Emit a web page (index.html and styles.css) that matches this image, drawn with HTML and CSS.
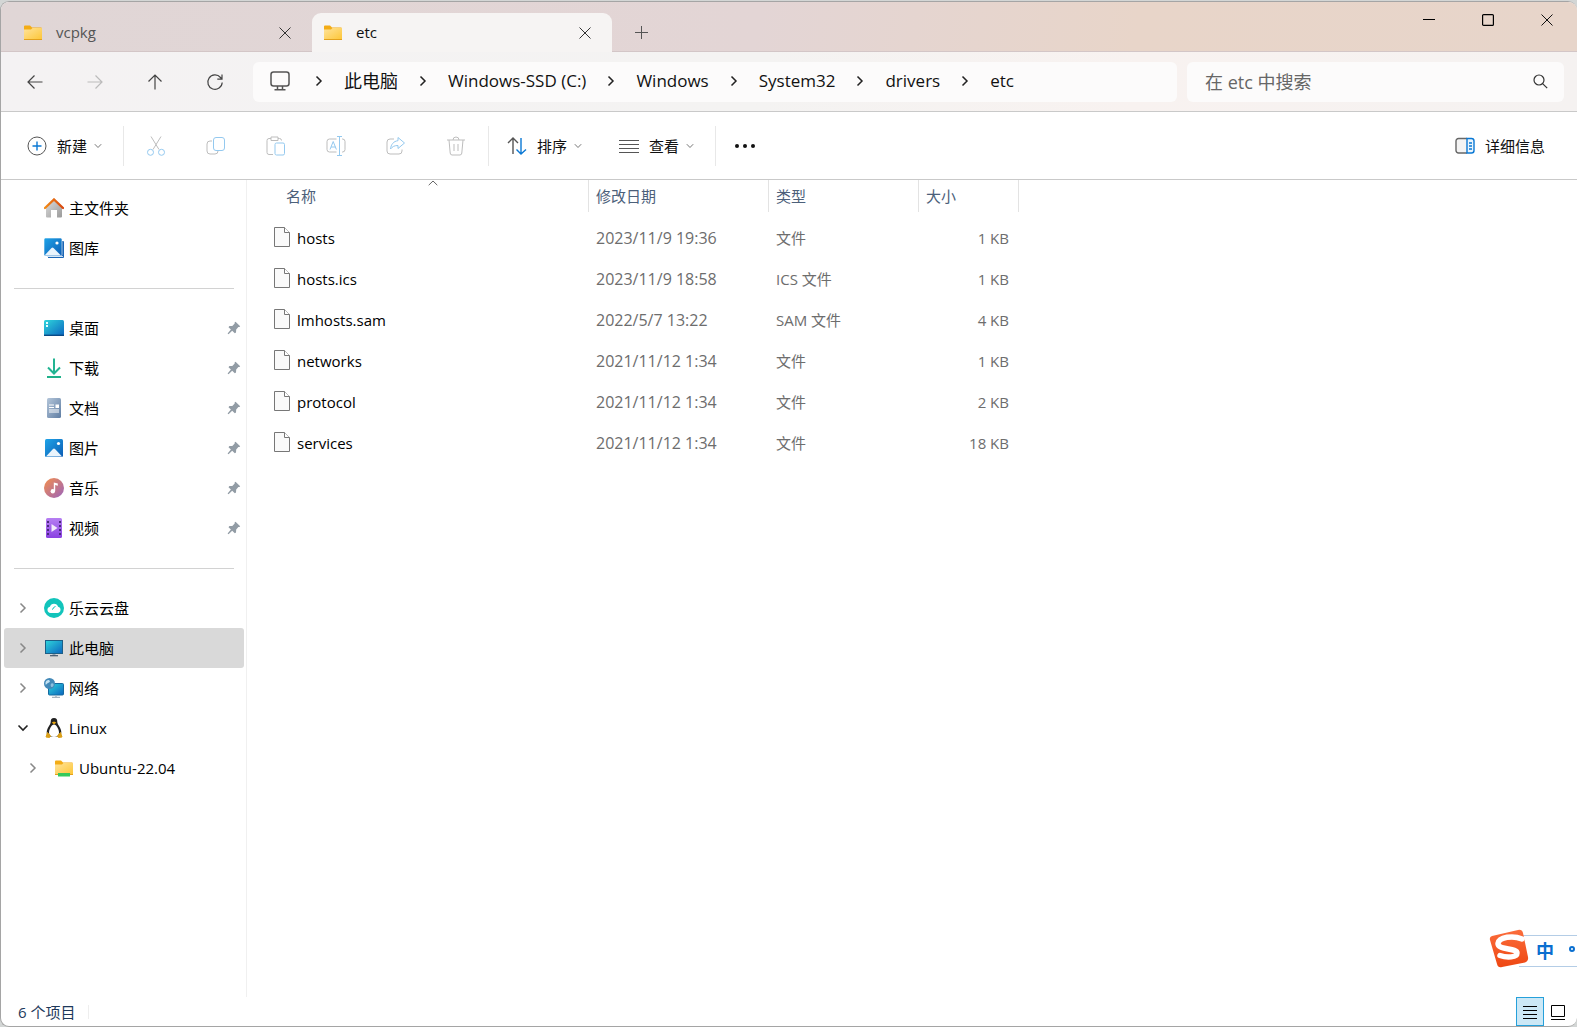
FILE: index.html
```html
<!DOCTYPE html>
<html lang="zh-CN">
<head>
<meta charset="utf-8">
<title>etc</title>
<meta name="viewport" content="width=device-width, initial-scale=1">
<link rel="stylesheet" href="styles.css">
</head>
<body>
<svg class="defs" width="0" height="0" aria-hidden="true">
  <defs>
    <linearGradient id="gFolder" x1="0" y1="0" x2="1" y2="1"><stop offset="0" stop-color="#ffe39a"/><stop offset="1" stop-color="#fdc637"/></linearGradient>
    <linearGradient id="gBlue" x1="0" y1="0" x2="1" y2="1"><stop offset="0" stop-color="#1fa4e8"/><stop offset="1" stop-color="#0c5cb4"/></linearGradient>
    <linearGradient id="gCyan" x1="0" y1="0" x2="1" y2="1"><stop offset="0" stop-color="#2fd6dc"/><stop offset="1" stop-color="#0b64bf"/></linearGradient>
    <linearGradient id="gHome" x1="0" y1="0" x2="1" y2="1"><stop offset="0" stop-color="#dcdcdc"/><stop offset="1" stop-color="#9a9a9a"/></linearGradient>
    <linearGradient id="gRoof" x1="0" y1="0" x2="1" y2="0"><stop offset="0" stop-color="#f28a17"/><stop offset="1" stop-color="#d8480f"/></linearGradient>
    <linearGradient id="gDoc" x1="0" y1="0" x2="1" y2="1"><stop offset="0" stop-color="#b4c6da"/><stop offset="1" stop-color="#5f7da3"/></linearGradient>
    <linearGradient id="gMusic" x1="0" y1="0" x2="1" y2="1"><stop offset="0" stop-color="#f58f4b"/><stop offset="1" stop-color="#9a63bd"/></linearGradient>
    <linearGradient id="gVideo" x1="0" y1="0" x2="0" y2="1"><stop offset="0" stop-color="#b67ff2"/><stop offset="1" stop-color="#8a41e2"/></linearGradient>
    <linearGradient id="gSogou" x1="0" y1="0" x2="0" y2="1"><stop offset="0" stop-color="#fb6d3c"/><stop offset="1" stop-color="#ee4712"/></linearGradient>
    <symbol id="folder" viewBox="0 0 20 20"><path d="M1 3.500a1 1 0 0 1 1-1h5l2 2h9.500v12.500H1z" fill="#f3ac16"/><path d="M1 6.500h7l1.500-1.500H18a1 1 0 0 1 1 1v10.500H1z" fill="url(#gFolder)"/><path d="M1 16.500h18" stroke="#e3a11c" stroke-width="1"/></symbol>
    <symbol id="close" viewBox="0 0 12 12"><path d="M.5.5l11 11M11.500.5l-11 11" stroke="currentColor" fill="none"/></symbol>
    <symbol id="chev" viewBox="0 0 8 12"><path d="M1.500 1.500L6 6l-4.500 4.500" stroke="currentColor" stroke-width="1.500" fill="none"/></symbol>
    <symbol id="caret" viewBox="0 0 8 6"><path d="M.8 1.200L4 4.500l3.200-3.300" stroke="#777" fill="none"/></symbol>
    <symbol id="pin" viewBox="0 0 14 14"><path d="M8.500.8l4.700 4.400-.8.900-1-.1-2.200 2.500-.2 3-1.200.7-2.600-2.400L1.500 13.200l-.9-.8 3.300-3.800L1.500 6.200l.9-1.200 2.900-.1 2.400-2.400-.1-1z" fill="#929ca5"/></symbol>
    <symbol id="file" viewBox="0 0 16 20"><path d="M.5.5h10l5 5v14H.5z" fill="#fafafa" stroke="#777"/><path d="M10.500.5v5h5" fill="#fff" stroke="#777"/></symbol>
  </defs>
</svg>

<div class="window">
  <header class="titlebar">
    <div class="tab">
      <svg class="ico"><use href="#folder"/></svg><span class="tab-name">vcpkg</span>
      <button class="tab-close" aria-label="关闭标签页"><svg width="12" height="12"><use href="#close"/></svg></button>
    </div>
    <div class="tab tab-active">
      <svg class="ico"><use href="#folder"/></svg><span class="tab-name">etc</span>
      <button class="tab-close" aria-label="关闭标签页"><svg width="12" height="12"><use href="#close"/></svg></button>
    </div>
    <button class="tab-add" aria-label="新标签页"><svg width="13" height="13" viewBox="0 0 13 13"><path d="M6.500 0v13M0 6.500h13" stroke="#555"/></svg></button>
    <div class="caption">
      <button aria-label="最小化"><svg width="12" height="12" viewBox="0 0 12 12"><path d="M0 5.500h12" stroke="#000"/></svg></button>
      <button aria-label="最大化"><svg width="12" height="12" viewBox="0 0 12 12"><rect x=".6" y=".6" width="10.800" height="10.800" rx="1" fill="none" stroke="#000" stroke-width="1.200"/></svg></button>
      <button aria-label="关闭"><svg width="12" height="12"><use href="#close"/></svg></button>
    </div>
  </header>

  <nav class="navbar" aria-label="导航">
    <button class="nav-btn" aria-label="后退"><svg width="16" height="16" viewBox="0 0 16 16"><path d="M15.500 8H1M7.500 1.500L1 8l6.500 6.500"/></svg></button>
    <button class="nav-btn nav-off" aria-label="前进"><svg width="16" height="16" viewBox="0 0 16 16"><path d="M.5 8H15M8.500 1.500L15 8l-6.500 6.500"/></svg></button>
    <button class="nav-btn" aria-label="向上"><svg width="16" height="16" viewBox="0 0 16 16"><path d="M8 15.500V1M1.500 7.500L8 1l6.500 6.500"/></svg></button>
    <button class="nav-btn" aria-label="刷新"><svg width="18" height="18" viewBox="0 0 18 18"><path d="M16.200 9.500A7.200 7.200 0 1 1 14.500 4.500L16 6.200M16 1.500v4.700h-4.700"/></svg></button>
    <div class="address">
      <svg class="pc" width="20" height="20" viewBox="0 0 20 20"><rect x="1" y="1" width="18" height="14" rx="2.500"/><path d="M7.500 15v3.500M12.500 15v3.500M4.500 18.700h11"/></svg>
      <svg class="sep"><use href="#chev"/></svg><a href="#" class="cjk">此电脑</a>
      <svg class="sep"><use href="#chev"/></svg><a href="#">Windows-SSD (C:)</a>
      <svg class="sep"><use href="#chev"/></svg><a href="#">Windows</a>
      <svg class="sep"><use href="#chev"/></svg><a href="#">System32</a>
      <svg class="sep"><use href="#chev"/></svg><a href="#">drivers</a>
      <svg class="sep"><use href="#chev"/></svg><a href="#">etc</a>
    </div>
    <label class="search">
      <input type="text" placeholder="在 etc 中搜索" aria-label="在 etc 中搜索">
      <svg width="15" height="15" viewBox="0 0 15 15"><circle cx="6" cy="6" r="5"/><path d="M9.600 9.600l4.600 4.600"/></svg>
    </label>
  </nav>

  <div class="toolbar">
    <button class="tool tool-new"><svg width="20" height="20" viewBox="0 0 20 20"><circle cx="10" cy="10" r="9" stroke="#555"/><path d="M10 5.500v9M5.500 10h9" stroke="#0a78d4" stroke-width="1.400"/></svg>新建<svg class="drop"><use href="#caret"/></svg></button>
    <span class="rule"></span>
    <div class="icons">
      <button disabled aria-label="剪切"><svg width="20" height="20" viewBox="0 0 20 20"><path d="M5 .5l8 13M15 .5l-8 13" stroke="#bdbdbd"/><circle cx="4.500" cy="16.300" r="3" stroke="#94c9ef"/><circle cx="15.500" cy="16.300" r="3" stroke="#94c9ef"/></svg></button>
      <button disabled aria-label="复制"><svg width="20" height="20" viewBox="0 0 20 20"><path d="M6 5H4a3 3 0 0 0-3 3v7a3 3 0 0 0 3 3h5a3 3 0 0 0 3-3" stroke="#bdbdbd"/><rect x="7.500" y="1.500" width="11" height="13" rx="2.500" stroke="#94c9ef"/></svg></button>
      <button disabled aria-label="粘贴"><svg width="20" height="20" viewBox="0 0 20 20"><path d="M5 2.500H3a2 2 0 0 0-2 2v12a2 2 0 0 0 2 2h4M12 2.500h1.500a2 2 0 0 1 2 2M5 1h7v3.500H5z" stroke="#bdbdbd"/><rect x="9" y="7" width="9.500" height="12" rx="1.500" stroke="#94c9ef"/></svg></button>
      <button disabled aria-label="重命名"><svg width="20" height="20" viewBox="0 0 20 20"><path d="M10.500 3H3.500A2.500 2.500 0 0 0 1 5.500v8A2.500 2.500 0 0 0 3.500 16h7M16 3h.5A2.500 2.500 0 0 1 19 5.500v8a2.500 2.500 0 0 1-2.500 2.500H16" stroke="#bdbdbd"/><path d="M13.500.5v19M11 .5h5M11 19.500h5M4 13.500l3.200-8 3.200 8M5 11h4.500" stroke="#94c9ef"/></svg></button>
      <button disabled aria-label="共享"><svg width="20" height="20" viewBox="0 0 20 20"><path d="M8 3H4a3 3 0 0 0-3 3v9a3 3 0 0 0 3 3h9a3 3 0 0 0 3-3v-1.500" stroke="#bdbdbd"/><path d="M12 1.500L18.500 7 12 12.500V9.500c-3.500 0-5.500 1-7.500 3.500.5-4.500 3-7.800 7.500-8.300z" stroke="#94c9ef"/></svg></button>
      <button disabled aria-label="删除"><svg width="20" height="20" viewBox="0 0 20 20"><path d="M1 4h18M7 4a3 3 0 0 1 6 0M3 4l1.200 13A2 2 0 0 0 6 19h8a2 2 0 0 0 1.800-2L17 4M8 8v7M12 8v7" stroke="#bdbdbd"/></svg></button>
    </div>
    <span class="rule"></span>
    <button class="tool"><svg width="20" height="20" viewBox="0 0 20 20"><path d="M6 18V2M1 7l5-5 5 5" stroke="#555" stroke-width="1.400"/><path d="M14 2v16M9.500 13.500L14 18l5-4.500" stroke="#0a78d4" stroke-width="1.400"/></svg>排序<svg class="drop"><use href="#caret"/></svg></button>
    <button class="tool"><svg width="20" height="20" viewBox="0 0 20 20"><path d="M0 4.500h20M0 8.500h20M0 12.500h20M0 16.500h20" stroke="#555"/></svg>查看<svg class="drop"><use href="#caret"/></svg></button>
    <span class="rule"></span>
    <button class="more" aria-label="更多"><svg width="22" height="6" viewBox="0 0 22 6"><circle cx="3" cy="3" r="2"/><circle cx="11" cy="3" r="2"/><circle cx="19" cy="3" r="2"/></svg></button>
    <button class="tool details"><svg width="20" height="20" viewBox="0 0 20 20"><path d="M12 2.500H3.500A2.500 2.500 0 0 0 1 5v9.500A2.500 2.500 0 0 0 3.500 17H12" stroke="#666" stroke-width="1.400" fill="#f4f4f4"/><path d="M12 2.500h4.500A2.500 2.500 0 0 1 19 5v9.500a2.500 2.500 0 0 1-2.500 2.500H12zM14 7h3M14 10h3M14 13h3" stroke="#0a78d4" stroke-width="1.400" fill="#eaf5fd"/></svg>详细信息</button>
  </div>

  <div class="body">
    <aside class="sidebar">
      <a href="#" class="item"><svg class="ico" viewBox="0 0 20 20"><path d="M2 9l8-7 8 7v9.500a1 1 0 0 1-1 1h-4V12H7v7.500H3a1 1 0 0 1-1-1z" fill="url(#gHome)"/><path d="M1 10l9-8.500 9 8.500" fill="none" stroke="url(#gRoof)" stroke-width="2.400" stroke-linecap="round"/></svg>主文件夹</a>
      <a href="#" class="item"><svg class="ico" viewBox="0 0 20 20"><path d="M4 3h15a1 1 0 0 1 1 1v15a1 1 0 0 1-1 1H4z" fill="#1b66b5"/><path d="M3 18.500h16" stroke="#c9dff3"/><rect width="18" height="18" rx="1.500" fill="url(#gBlue)" stroke="#fff" stroke-width=".6"/><path d="M.5 17.500l7-7.500a1.500 1.500 0 0 1 2 0l7.500 7.500z" fill="#eaf4fc"/><circle cx="13" cy="5" r="1.600" fill="#fff"/></svg>图库</a>
      <hr>
      <a href="#" class="item"><svg class="ico" viewBox="0 0 20 20"><rect y="2" width="20" height="16" rx="1.500" fill="url(#gCyan)"/><path d="M0 17.300h20" stroke="#0a4a86" stroke-width="1.400"/><path d="M2 4h2v2H2zM2 7h2v2H2z" fill="#e5ffff"/></svg>桌面<svg class="pin"><use href="#pin"/></svg></a>
      <a href="#" class="item"><svg class="ico" viewBox="0 0 20 20"><path d="M10 .5v15M4 9.500l6 6 6-6" fill="none" stroke="#22b492" stroke-width="2"/><path d="M3 19h14" stroke="#1fb18a" stroke-width="2"/></svg>下载<svg class="pin"><use href="#pin"/></svg></a>
      <a href="#" class="item"><svg class="ico" viewBox="0 0 20 20"><rect x="3" width="14" height="20" rx="1.500" fill="url(#gDoc)"/><path d="M5 7h5M5 9.500h5M5 12h10M5 14h10" stroke="#fff" stroke-width="1.200"/><path d="M11.500 6.500H15V10h-3.500z" fill="#fff"/></svg>文档<svg class="pin"><use href="#pin"/></svg></a>
      <a href="#" class="item"><svg class="ico" viewBox="0 0 20 20"><rect x="1" y="1" width="18" height="18" rx="1.500" fill="url(#gBlue)"/><path d="M2 18.500l7-7.500a1.500 1.500 0 0 1 2 0l7 7.500z" fill="#eaf4fc"/><circle cx="14.500" cy="5.500" r="1.600" fill="#fff"/></svg>图片<svg class="pin"><use href="#pin"/></svg></a>
      <a href="#" class="item"><svg class="ico" viewBox="0 0 20 20"><circle cx="10" cy="10" r="10" fill="url(#gMusic)"/><circle cx="8.800" cy="13.200" r="2.200" fill="#fff"/><path d="M9.800 13.200V4.500l4 1v2.200l-2.600-.6v6.100z" fill="#fff"/></svg>音乐<svg class="pin"><use href="#pin"/></svg></a>
      <a href="#" class="item"><svg class="ico" viewBox="0 0 20 20"><rect x="2" width="16" height="20" rx="1.500" fill="url(#gVideo)"/><path d="M4 3v15M16 3v15" stroke="#4b2a7d" stroke-width="2" stroke-dasharray="2 2"/><path d="M7.500 6l6 4-6 4z" fill="#f2eafb"/></svg>视频<svg class="pin"><use href="#pin"/></svg></a>
      <hr>
      <a href="#" class="item"><svg class="exp"><use href="#chev"/></svg><svg class="ico" viewBox="0 0 20 20"><circle cx="10" cy="10" r="10" fill="#12c4bb"/><path d="M6.500 15a3.200 3.200 0 0 1-.6-6.300 4.300 4.300 0 0 1 8.200 0A3.200 3.200 0 0 1 13.500 15z" fill="#fff"/><path d="M8 11.500c1.500 0 1.300-3 3.500-3" fill="none" stroke="#12c4bb"/></svg>乐云云盘</a>
      <a href="#" class="item selected"><svg class="exp"><use href="#chev"/></svg><svg class="ico" viewBox="0 0 20 20"><rect x="1.500" y="2.500" width="17" height="13" fill="url(#gCyan)" stroke="#1d5f86"/><path d="M10 16v2" stroke="#8fa3b3" stroke-width="3"/><path d="M6 17.700h8" stroke="#44566a" stroke-width="1.200"/></svg>此电脑</a>
      <a href="#" class="item"><svg class="exp"><use href="#chev"/></svg><svg class="ico" viewBox="0 0 20 20"><rect x="4.500" y="5.500" width="15" height="11.500" rx="1" fill="url(#gCyan)" stroke="#156a9f"/><path d="M8 19.400h8M12 17.500v1.500" stroke="#a6b3bf" stroke-width="1.400"/><circle cx="5.500" cy="5.500" r="5.500" fill="#4389b8"/><path d="M1.500 4.500c1-2.500 3-3 4-2s0 2-1.500 2.500-1.500 2-2.500 1.500z" fill="#c4e2f2"/><path d="M7.500 5.500c1.500-.5 2.500.5 2 2S7.500 9.500 7 8.500s-.5-2.500.5-3z" fill="#8fc0dd"/></svg>网络</a>
      <a href="#" class="item"><svg class="exp open" viewBox="0 0 12 8"><path d="M1.500 1.500L6 6l4.500-4.500" fill="none" stroke="#222" stroke-width="1.600"/></svg><svg class="ico" viewBox="0 0 20 20"><path d="M10 0c2.500 0 3.300 1.500 3.300 4 0 3 4 5.500 4 10.500 0 3-2.300 4.500-7.300 4.500S2.700 17.500 2.700 14.500c0-5 4-7.500 4-10.500 0-2.500.8-4 3.300-4z" fill="#222"/><path d="M10 6.500c2.500 0 5 5 5 8s-2 4.500-5 4.500-5-1.500-5-4.500 2.500-8 5-8z" fill="#fff"/><path d="M7.800 4.500L10 3.500l2.300 1L10 6.500z" fill="#e5a50f"/><path d="M3.500 14.500l3 3.500-1 1.500-3.500-.5zM16.500 14.500l-3 3.500 1 1.500 3.500-.5z" fill="#dba019" stroke="#dba019"/></svg>Linux</a>
      <a href="#" class="item child"><svg class="exp"><use href="#chev"/></svg><svg class="ico" viewBox="0 0 20 20"><use href="#folder"/><path d="M4 15h12v3.500H4z" fill="#35c95b"/></svg>Ubuntu-22.04</a>
    </aside>

    <main class="files">
      <table>
        <colgroup><col class="c-name"><col class="c-date"><col class="c-type"><col class="c-size"></colgroup>
        <thead><tr><th scope="col">名称<svg class="sort" width="10" height="6" viewBox="0 0 10 6"><path d="M.7 5.200L5 1l4.300 4.200" fill="none" stroke="#666"/></svg></th><th scope="col">修改日期</th><th scope="col">类型</th><th scope="col">大小</th></tr></thead>
        <tbody>
          <tr><td><div class="name"><svg><use href="#file"/></svg>hosts</div></td><td>2023/11/9 19:36</td><td>文件</td><td>1 KB</td></tr>
          <tr><td><div class="name"><svg><use href="#file"/></svg>hosts.ics</div></td><td>2023/11/9 18:58</td><td>ICS 文件</td><td>1 KB</td></tr>
          <tr><td><div class="name"><svg><use href="#file"/></svg>lmhosts.sam</div></td><td>2022/5/7 13:22</td><td>SAM 文件</td><td>4 KB</td></tr>
          <tr><td><div class="name"><svg><use href="#file"/></svg>networks</div></td><td>2021/11/12 1:34</td><td>文件</td><td>1 KB</td></tr>
          <tr><td><div class="name"><svg><use href="#file"/></svg>protocol</div></td><td>2021/11/12 1:34</td><td>文件</td><td>2 KB</td></tr>
          <tr><td><div class="name"><svg><use href="#file"/></svg>services</div></td><td>2021/11/12 1:34</td><td>文件</td><td>18 KB</td></tr>
        </tbody>
      </table>
    </main>
  </div>

  <footer class="status">
    <span class="count">6 个项目</span>
    <button class="view view-on" aria-label="详细信息视图"><svg width="16" height="16" viewBox="0 0 16 16"><path d="M1 2.500h14M1 6.500h14M1 10.500h14M1 14.500h14" stroke="#000"/></svg></button>
    <button class="view" aria-label="大图标视图"><svg width="16" height="16" viewBox="0 0 16 16"><path d="M1.500 1.500h13v11h-13zM1 15.500h14" fill="none" stroke="#000"/></svg></button>
  </footer>

  <div class="ime">
    <svg class="ime-logo" viewBox="0 0 40 40"><path d="M3 7L29 1q4-.8 5 3l5 24q.8 4-3 5.500L13 38q-4 1-5-3L1 11q-.8-3 2-4z" fill="url(#gSogou)"/><path d="M33 10C24 6 10 8 9 14.500c-.5 6.500 19 4.500 19 9.500 0 4.500-10 5-17 2.500" fill="none" stroke="#fff" stroke-width="5.500" stroke-linecap="round"/></svg>
    <div class="ime-bar"><span>中</span><i></i></div>
  </div>
</div>
</body>
</html>
```
FILE: styles.css
```css
* { box-sizing: border-box; }

body {
  margin: 0;
  background: #d3d6d5;
  font: 15px/20px "Open Sans", "Noto Sans CJK SC", sans-serif;
  color: #111;
}

button {
  display: flex;
  align-items: center;
  justify-content: center;
  padding: 0;
  border: 0;
  background: none;
  font: inherit;
  color: inherit;
}

a { color: inherit; text-decoration: none; }
svg { flex: none; display: block; }
.defs { position: absolute; }
.ico { width: 20px; height: 20px; }

.window {
  position: relative;
  display: flex;
  flex-direction: column;
  min-height: calc(100vh - 1px);
  margin-top: 1px;
  border: 1px solid #a5a5a5;
  border-right-width: 0;
  border-radius: 9px;
  background: #fff;
  overflow: hidden;
}

/* title bar and tabs */
.titlebar {
  display: flex;
  height: 50px;
  padding-top: 11px;
  border-bottom: 1px solid #d3c6c7;
  background: linear-gradient(100deg, #e0d6d6 0%, #e3d5d5 48%, #e8d5c9 72%, #e7d5ca 100%);
}

.tab {
  display: flex;
  align-items: center;
  flex: 0 1 300px;
  height: 39px;
  padding: 0 21px 0 11px;
  color: #555;
}
.tab:first-child { margin-left: 11px; }
.tab-name { flex: 1; padding: 0 0 2px 13px; }
.tab-close { color: #333; }
.tab-active {
  border-radius: 9px 9px 0 0;
  background: #f6f4f3;
  color: #111;
}
.tab-add { width: 58px; height: 39px; }

.caption { display: flex; margin: -11px 1px 0 auto; }
.caption button { width: 59px; height: 36px; }

/* navigation row */
.navbar {
  display: flex;
  align-items: center;
  height: 60px;
  padding: 0 13px 0 4px;
  border-bottom: 1px solid #c9c9c9;
  background: linear-gradient(100deg, #f4f2f3 0%, #f4f3f2 48%, #f8f2f0 72%, #f5f2f1 100%);
}
.nav-btn { width: 60px; height: 40px; }
.nav-btn svg { fill: none; stroke: #444; stroke-width: 1.2; }
.nav-off svg { stroke: #bbb; }

.address, .search {
  display: flex;
  align-items: center;
  height: 40px;
  border-radius: 6px;
  background: #fcfbfb;
}
.address {
  flex: 1;
  min-width: 0;
  margin: 0 10px 0 8px;
  padding: 0 0 2px 17px;
  font-size: 17px;
  white-space: nowrap;
  overflow: hidden;
}
.address .cjk { font-size: 18px; }
.pc { margin-right: 4px; fill: none; stroke: #555; stroke-width: 1.5; }
.sep { width: 8px; height: 12px; margin: 0 21px; color: #222; }

.search { flex: 0 1 377px; padding: 0 16px 0 18px; }
.search input {
  flex: 1;
  min-width: 0;
  padding: 0;
  border: 0;
  outline: 0;
  background: none;
  font: 18px/24px "Open Sans", "Noto Sans CJK SC", sans-serif;
}
.search input::placeholder { color: #666; opacity: 1; }
.search svg { fill: none; stroke: #333; stroke-width: 1.2; }

/* command bar */
.toolbar {
  display: flex;
  align-items: center;
  height: 68px;
  padding: 0 32px 0 26px;
  border-bottom: 1px solid #c9c9c9;
}
.toolbar svg { fill: none; }
.tool { gap: 10px; height: 40px; margin-right: 37px; white-space: nowrap; }
.tool-new { margin-right: 21px; }
.drop { width: 8px; height: 6px; margin-left: -3px; }
.rule { width: 1px; height: 40px; margin-right: 18px; background: #e8e8e8; }
.icons { display: flex; margin: 0 2px 0 -16px; }
.icons button { width: 60px; height: 40px; }
.tool + .rule { margin-left: -16px; }
.tool-new + .rule { margin-left: 0; }
.toolbar .more svg { fill: #111; }
.details { margin: 0 0 0 auto; }

/* folder tree */
.body { display: flex; flex: 1; }
.sidebar {
  flex: 0 0 246px;
  padding: 8px 2px 0 3px;
  border-right: 1px solid #f0f0f0;
  color: #000;
}
.item {
  display: flex;
  align-items: center;
  height: 40px;
  padding: 0 3px 0 40px;
  border-radius: 3px;
}
.item .ico { margin-right: 5px; }
.selected { background: #d9d9d9; }
.exp { width: 8px; height: 12px; margin: 0 17px 0 -25px; color: #888; }
.open { width: 12px; height: 8px; margin: 0 15px 0 -27px; }
.child { padding-left: 50px; }
.pin { width: 14px; height: 14px; margin-left: auto; }
.sidebar hr {
  height: 1px;
  margin: 20px 10px 19px 10px;
  border: 0;
  background: #d2d2d2;
}

/* file list */
.files { flex: 1; min-width: 0; overflow: hidden; }
table {
  table-layout: fixed;
  width: 772px;
  border-spacing: 0;
  color: #6d6d6d;
}
.c-name { width: 342px; }
.c-date { width: 180px; }
.c-type { width: 150px; }
.c-size { width: 100px; }
th {
  position: relative;
  height: 32px;
  padding: 0 7px;
  border-right: 1px solid #e3e3e3;
  font-weight: 400;
  text-align: left;
  color: #4c607a;
}
th:first-child { padding-left: 39px; }
.sort { position: absolute; top: 0; left: 181px; }
tbody::before { content: ""; display: block; height: 6px; }
td { height: 41px; padding: 0 7px 2px; }
td:nth-child(2) { font-size: 16px; }
td:last-child { padding-right: 10px; text-align: right; }
.name { display: flex; align-items: center; gap: 7px; padding-left: 20px; color: #000; }
.name svg { width: 16px; height: 20px; margin-bottom: 2px; }

/* status bar */
.status { display: flex; align-items: center; height: 29px; padding-right: 5px; }
.count {
  margin-right: auto;
  padding: 0 13px 0 17px;
  border-right: 1px solid #eee;
  line-height: 14px;
  color: #1e395b;
}
.view { width: 28px; height: 29px; }
.view-on { border: 1px solid #26a0da; background: #cce8f6; }

/* input method badge floating over the window */
.ime {
  position: absolute;
  right: 0;
  bottom: 57px;
  display: flex;
  align-items: center;
}
.ime-logo { position: relative; width: 40px; height: 40px; }
.ime-bar {
  display: flex;
  align-items: center;
  width: 58px;
  height: 32px;
  margin: 4px 0 0 -10px;
  padding-left: 17px;
  border: 1px solid #b4cde6;
  border-width: 1px 0;
  background: #fff;
  font-size: 18px;
  font-weight: 700;
  color: #0a6fd0;
}
.ime-bar i {
  flex: none;
  width: 6px;
  height: 6px;
  margin: -4px 0 0 15px;
  border: 2px solid #0a6fd0;
  border-radius: 50%;
}
```
